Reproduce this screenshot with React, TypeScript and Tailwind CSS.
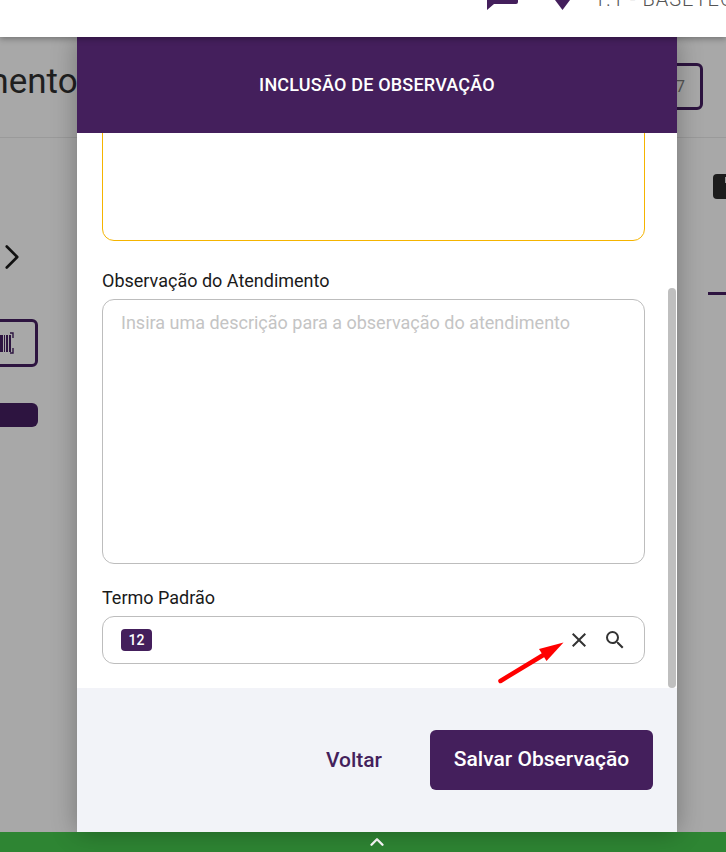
import { ChevronRight, ChevronUp } from "lucide-react";
import { MdClose, MdSearch } from "react-icons/md";

function Barcode() {
  return (
    <svg width="20" height="22" viewBox="0 0 20 22" fill="none" className="text-[#2d1440]">
      <path d="M0 3h2v17H0zM3 3h3v17H3zM7 3h1v17H7zM9 3h2v17H9zM12 3h2v17h-2z" fill="currentColor" />
      <path d="M13 1h3v5M13 21h3v-5" stroke="currentColor" strokeWidth="1.4" />
    </svg>
  );
}

function PageBehind() {
  return (
    <div className="flex flex-1 flex-col overflow-hidden bg-[#a8a8a8]">
      <div className="flex h-[101px] items-center justify-between border-b border-[#9a9a9a]">
        <h1 className="ml-[-22px] mt-[-9px] text-[35px] text-[#1f1f1f]">mento</h1>
        <div className="mr-[23px] mt-[-1px] flex h-[47px] w-[50px] items-center justify-start rounded-md border-[3px] border-[#2d1440] pl-[20px] text-base text-[#555]">
          7
        </div>
      </div>
      <div className="flex flex-1 justify-between">
        <div className="flex w-[38px] flex-col items-end">
          <ChevronRight className="mt-[98px] mr-[5px] shrink-0 text-[#111]" size={42} strokeWidth={1.5} />
          <div className="mt-[41px] flex h-[48px] w-[60px] shrink-0 items-center justify-end rounded-md border-[3px] border-[#2d1440] pr-[18px]">
            <Barcode />
          </div>
          <div className="mt-[36px] h-[24px] w-[60px] shrink-0 rounded-md bg-[#2d1440]" />
        </div>
        <div className="flex w-[18px] flex-col items-end">
          <div className="mt-[36px] flex h-[25px] w-[13px] justify-end rounded-l bg-[#1c1c1c] pt-[3px]">
            <div className="h-[6px] w-[1px] bg-[#999]" />
          </div>
          <div className="mt-[93px] h-[3px] w-[18px] bg-[#2d1440]" />
        </div>
      </div>
    </div>
  );
}

function Modal() {
  return (
    <div className="absolute left-[77px] top-[37px] flex h-[795px] w-[600px] flex-col shadow-[0_0_24px_rgba(0,0,0,0.3)]">
      <header className="flex h-[96px] shrink-0 items-center justify-center bg-[#441f5c]">
        <h2 className="text-lg font-medium tracking-[0.2px] text-white">INCLUSÃO DE OBSERVAÇÃO</h2>
      </header>
      <div className="relative flex h-[555px] shrink-0 flex-col overflow-hidden bg-white px-[25px]">
        <div className="mt-[-40px] h-[148px] w-[543px] shrink-0 rounded-xl border border-[#f5b400]" />
        <label className="mt-[29px] text-lg leading-[22px] text-[#1a1a1a]">Observação do Atendimento</label>
        <div className="mt-[7px] h-[265px] w-[543px] shrink-0 rounded-xl border border-[#bdbdbd] px-[18px] py-[12px] text-lg leading-[22px] text-[#c4c4c4]">
          Insira uma descrição para a observação do atendimento
        </div>
        <label className="mt-[23px] text-lg leading-[22px] text-[#1a1a1a]">Termo Padrão</label>
        <div className="mt-[7px] flex h-[48px] w-[543px] shrink-0 items-center rounded-xl border border-[#bdbdbd] pl-[18px] pr-[17px]">
          <span className="flex h-[22px] w-[31px] items-center justify-center rounded bg-[#441f5c] text-sm font-medium text-white">
            12
          </span>
          <MdClose className="ml-auto text-[#333]" size={24} />
          <MdSearch className="ml-[12px] text-[#333]" size={24} />
        </div>
        <div className="absolute right-[1px] top-[155px] h-[400px] w-[8px] rounded-full bg-[#bfbfbf]" />
      </div>
      <footer className="flex flex-1 items-center justify-end gap-[48px] bg-[#f2f3f8] pr-[24px]">
        <button className="mt-[1px] text-[21px] font-medium text-[#441f5c]">Voltar</button>
        <button className="flex h-[60px] w-[223px] items-center justify-center rounded-md bg-[#441f5c] text-[21px] font-medium text-white">
          Salvar Observação
        </button>
      </footer>
    </div>
  );
}

export default function App() {
  return (
    <div className="relative flex h-[852px] w-[726px] flex-col overflow-hidden font-['Roboto',sans-serif]">
      <div className="relative z-10 flex h-[37px] shrink-0 items-start overflow-hidden bg-white pl-[487px] shadow-[0_2px_6px_rgba(0,0,0,0.3)]">
        <svg width="31" height="10" viewBox="0 0 31 10" className="shrink-0 text-[#441f5c]">
          <path d="M0 0h31v2q0 2-2 2H7l-7 6z" fill="currentColor" />
        </svg>
        <svg width="15" height="10" viewBox="0 0 15 10" className="ml-[37px] shrink-0 text-[#441f5c]">
          <path d="M0 0h15L7.500 10z" fill="currentColor" />
        </svg>
        <span className="ml-[24px] mt-[-16px] whitespace-nowrap text-[20px] font-light tracking-[1px] text-[#555]">
          1.1 - BASETEC
        </span>
      </div>
      <PageBehind />
      <div className="flex h-[20px] shrink-0 items-center justify-center bg-[#2e8533] pl-[28px]">
        <ChevronUp className="text-white" size={22} strokeWidth={2.6} />
      </div>
      <Modal />
      <svg
        width="72"
        height="46"
        viewBox="0 0 72 46"
        className="absolute left-[496px] top-[639px] text-[#ff0000]"
      >
        <path d="M4.500 42 49 15" stroke="currentColor" strokeWidth="4.500" strokeLinecap="round" />
        <path d="M67.500 3.500 43 10 50.500 22z" fill="currentColor" />
      </svg>
    </div>
  );
}
